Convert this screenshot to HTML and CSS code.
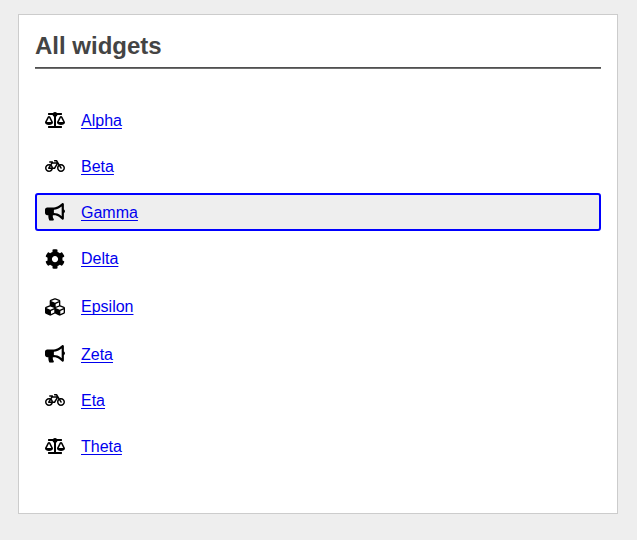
FILE: index.html
```html
<!DOCTYPE html>
<html lang="en">
<head>
<meta charset="utf-8">
<title>All widgets</title>
<link rel="stylesheet" href="styles.css">
</head>
<body>
<svg class="sprite" aria-hidden="true">
<symbol id="scale" viewBox="0 0 640 512"><path d="M256 336h-.02c0-16.18 1.34-8.73-85.05-181.51-17.65-35.29-68.19-35.36-85.87 0C-2.06 328.75.02 320.33.02 336H0c0 44.18 57.31 80 128 80s128-35.82 128-80zM128 176l72 144H56l72-144zm511.98 160c0-16.18 1.34-8.73-85.05-181.51-17.65-35.29-68.19-35.36-85.87 0-87.12 174.26-85.04 165.84-85.04 181.51H384c0 44.18 57.31 80 128 80s128-35.82 128-80h-.02zM440 320l72-144 72 144H440zm88 128H352V153.25c23.51-10.29 41.16-31.48 46.39-57.25H528c8.84 0 16-7.16 16-16V48c0-8.84-7.16-16-16-16H383.64C369.04 12.68 346.09 0 320 0s-49.04 12.68-63.64 32H112c-8.84 0-16 7.16-16 16v32c0 8.84 7.16 16 16 16h129.61c5.23 25.76 22.87 46.96 46.39 57.25V448H112c-8.84 0-16 7.16-16 16v32c0 8.84 7.16 16 16 16h416c8.84 0 16-7.16 16-16v-32c0-8.84-7.16-16-16-16z"/></symbol>
<symbol id="bicycle" viewBox="0 0 640 512"><path d="M512.509 192.001c-16.373-.064-32.03 2.955-46.436 8.495l-77.68-125.153A24 24 0 0 0 368.001 64h-64c-8.837 0-16 7.163-16 16v16c0 8.837 7.163 16 16 16h50.649l14.896 24H256.002v-16c0-8.837-7.163-16-16-16h-87.459c-13.441 0-24.777 10.999-24.536 24.437.232 13.044 10.876 23.563 23.995 23.563h48.726l-29.417 47.52c-13.433-4.83-27.904-7.483-42.992-7.52C58.094 191.83.412 249.012.002 319.236-.413 390.279 57.055 448 128.002 448c59.642 0 109.758-40.793 123.967-96h52.033a24 24 0 0 0 20.406-11.367L410.37 201.77l14.938 24.067c-25.455 23.448-41.385 57.081-41.307 94.437.145 68.833 57.899 127.051 126.729 127.719 70.606.685 128.181-55.803 129.255-125.996 1.086-70.941-56.526-129.72-127.476-129.996zM186.75 265.772c9.727 10.529 16.673 23.661 19.642 38.228h-43.306l23.664-38.228zM128.002 400c-44.112 0-80-35.888-80-80s35.888-80 80-80c5.869 0 11.586.653 17.099 1.859l-45.505 73.509C89.715 331.327 101.213 352 120.002 352h81.3c-12.37 28.225-40.562 48-73.3 48zm162.63-96h-35.624c-3.96-31.756-19.556-59.894-42.383-80.026L237.371 184h127.547l-74.286 120zm217.057 95.886c-41.036-2.165-74.049-35.692-75.627-76.755-.812-21.121 6.633-40.518 19.335-55.263l44.433 71.586c4.66 7.508 14.524 9.816 22.032 5.156l13.594-8.437c7.508-4.66 9.817-14.524 5.156-22.032l-44.468-71.643a79.901 79.901 0 0 1 19.858-2.497c44.112 0 80 35.888 80 80-.001 45.54-38.252 82.316-84.313 79.885z"/></symbol>
<symbol id="bullhorn" viewBox="0 0 576 512"><path d="M576 240c0-23.63-12.95-44.04-32-55.12V32.01C544 23.26 537.02 0 512 0c-7.12 0-14.19 2.38-19.98 7.02l-85.03 68.03C364.28 109.19 310.66 128 256 128H64c-35.35 0-64 28.65-64 64v96c0 35.35 28.65 64 64 64h33.7c-1.39 10.48-2.18 21.14-2.18 32 0 39.77 9.26 77.35 25.56 110.94 5.19 10.69 16.52 17.06 28.4 17.06h74.28c26.05 0 41.69-29.84 25.9-50.56-16.4-21.52-26.15-48.36-26.15-77.44 0-11.11 1.62-21.79 4.41-32H256c54.66 0 108.28 18.81 150.98 52.95l85.03 68.03a32.023 32.023 0 0 0 19.98 7.02c24.92 0 32-22.78 32-32V295.13C563.05 284.04 576 263.63 576 240zm-96 141.42l-33.05-26.44C392.95 311.78 325.12 288 256 288v-96c69.12 0 136.95-23.78 190.95-66.98L480 98.58v282.84z"/></symbol>
<symbol id="cog" viewBox="0 0 512 512"><path d="M487.4 315.7l-42.6-24.6c4.3-23.2 4.3-47 0-70.2l42.6-24.6c4.9-2.8 7.1-8.6 5.5-14-11.1-35.6-30-67.8-54.7-94.6-3.8-4.1-10-5.1-14.8-2.3L380.8 110c-17.9-15.4-38.5-27.3-60.8-35.1V25.8c0-5.6-3.9-10.5-9.4-11.7-36.7-8.2-74.3-7.8-109.2 0-5.5 1.2-9.4 6.1-9.4 11.7V75c-22.2 7.9-42.8 19.8-60.8 35.1L88.7 85.5c-4.9-2.8-11-1.9-14.8 2.3-24.7 26.7-43.6 58.9-54.7 94.6-1.7 5.4.6 11.2 5.5 14L67.3 221c-4.3 23.2-4.3 47 0 70.2l-42.6 24.6c-4.9 2.8-7.1 8.6-5.5 14 11.1 35.6 30 67.8 54.7 94.6 3.8 4.1 10 5.1 14.8 2.3l42.6-24.6c17.9 15.4 38.5 27.3 60.8 35.1v49.2c0 5.6 3.9 10.5 9.4 11.7 36.7 8.2 74.3 7.8 109.2 0 5.5-1.2 9.4-6.1 9.4-11.7v-49.2c22.2-7.9 42.8-19.8 60.8-35.1l42.6 24.6c4.9 2.8 11 1.9 14.8-2.3 24.7-26.7 43.6-58.9 54.7-94.6 1.5-5.5-.7-11.3-5.6-14.1zM256 336c-44.1 0-80-35.9-80-80s35.9-80 80-80 80 35.9 80 80-35.9 80-80 80z"/></symbol>
<symbol id="cubes" viewBox="0 0 512 512"><path d="M488.6 250.2L392 214V105.5c0-15-9.3-28.4-23.4-33.7l-100-37.5c-8.1-3.1-17.1-3.1-25.3 0l-100 37.5c-14.1 5.3-23.4 18.7-23.4 33.7V214l-96.6 36.2C9.3 255.5 0 268.9 0 283.9V394c0 13.6 7.7 26.1 19.9 32.2l100 50c10.1 5.1 22.1 5.1 32.2 0l103.9-52 103.9 52c10.1 5.1 22.1 5.1 32.2 0l100-50c12.2-6.1 19.9-18.6 19.9-32.2V283.9c0-15-9.3-28.4-23.4-33.7zM358 214.8l-85 31.9v-68.2l85-37v73.3zM154 104.1l102-38.2 102 38.2v.6l-102 41.4-102-41.4v-.6zm84 291.1l-85 42.5v-79.1l85-38.8v75.4zm0-112l-102 41.4-102-41.4v-.6l102-38.2 102 38.2v.6zm240 112l-85 42.5v-79.1l85-38.8v75.4zm0-112l-102 41.4-102-41.4v-.6l102-38.2 102 38.2v.6z"/></symbol>
</svg>
<main class="panel">
<h1 class="title">All widgets</h1>
<ul class="widgets">
<li class="widget"><svg class="icon icon-wide"><use href="#scale"/></svg><a class="link" href="#">Alpha</a></li>
<li class="widget"><svg class="icon icon-wide"><use href="#bicycle"/></svg><a class="link" href="#">Beta</a></li>
<li class="widget active"><svg class="icon icon-medium"><use href="#bullhorn"/></svg><a class="link" href="#">Gamma</a></li>
<li class="widget"><svg class="icon"><use href="#cog"/></svg><a class="link" href="#">Delta</a></li>
<li class="widget"><svg class="icon"><use href="#cubes"/></svg><a class="link" href="#">Epsilon</a></li>
<li class="widget"><svg class="icon icon-medium"><use href="#bullhorn"/></svg><a class="link" href="#">Zeta</a></li>
<li class="widget"><svg class="icon icon-wide"><use href="#bicycle"/></svg><a class="link" href="#">Eta</a></li>
<li class="widget"><svg class="icon icon-wide"><use href="#scale"/></svg><a class="link" href="#">Theta</a></li>
</ul>
</main>
</body>
</html>
```
FILE: styles.css
```css
* { box-sizing: border-box; }
body {
  margin: 0;
  padding: 14px 19px 26px 18px;
  background: #eee;
  font: 16px/18px "Liberation Sans", Arial, sans-serif;
}
.sprite { display: none; }
.panel {
  height: 500px;
  padding: 16px;
  background: #fff;
  border: 1px solid #ccc;
}
.title {
  margin: 0;
  height: 38px;
  border-bottom: 2px groove #888;
  color: #444;
  font-size: 24px;
  line-height: 30px;
  border-bottom: 1px solid #505050;
  box-shadow: 0 1px 0 #707070;
  height: 37px;
}
.widgets {
  display: flex;
  flex-direction: column;
  gap: 8px;
  margin: 33px 0 0;
  padding: 0;
  list-style: none;
}
.widget {
  display: flex;
  align-items: flex-start;
  gap: 16px;
  min-height: 38px;
  padding: 8px;
  border: 2px solid transparent;
  border-radius: 3px;
}
.active {
  background: #eee;
  border-color: #00f;
}
.icon {
  width: 20px;
  height: 20px;
  align-self: center;
}
.icon-wide { height: 16px; }
.icon-medium { height: 17.78px; }
.link {
  height: 18px;
  line-height: 20px;
  color: #00e;
  text-decoration: underline 1px;
  text-underline-offset: 2px;
  text-decoration-skip-ink: none;
}
```
